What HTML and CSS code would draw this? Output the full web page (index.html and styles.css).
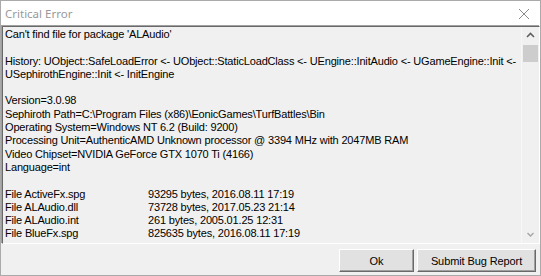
FILE: index.html
```html
<!DOCTYPE html>
<html lang="en">
<head>
    <meta charset="UTF-8">
    <title>Critical Error</title>
    <link rel="stylesheet" href="styles.css">
</head>
<body>
    <div class="window">
        <div class="titlebar">
            <span class="title">Critical Error</span>
            <svg class="close" width="12" height="12" viewBox="0 0 12 12">
                <path d="M1 1 L11 11 M11 1 L1 11" stroke="#8a8a8a" stroke-width="1" fill="none"/>
            </svg>
        </div>
        <div class="log">
            <div class="log-text">
                <div class="line">Can't find file for package 'ALAudio'</div>
                <div class="line">&nbsp;</div>
                <div class="line">History: UObject::SafeLoadError &lt;- UObject::StaticLoadClass &lt;- UEngine::InitAudio &lt;- UGameEngine::Init &lt;-</div>
                <div class="line">USephirothEngine::Init &lt;- InitEngine</div>
                <div class="line">&nbsp;</div>
                <div class="line">Version=3.0.98</div>
                <div class="line">Sephiroth Path=C:\Program Files (x86)\EonicGames\TurfBattles\Bin</div>
                <div class="line">Operating System=Windows NT 6.2 (Build: 9200)</div>
                <div class="line">Processing Unit=AuthenticAMD Unknown processor @ 3394 MHz with 2047MB RAM</div>
                <div class="line">Video Chipset=NVIDIA GeForce GTX 1070 Ti (4166)</div>
                <div class="line">Language=int</div>
                <div class="line">&nbsp;</div>
                <div class="file"><span>File ActiveFx.spg</span><span>93295 bytes, 2016.08.11 17:19</span></div>
                <div class="file"><span>File ALAudio.dll</span><span>73728 bytes, 2017.05.23 21:14</span></div>
                <div class="file"><span>File ALAudio.int</span><span>261 bytes, 2005.01.25 12:31</span></div>
                <div class="file"><span>File BlueFx.spg</span><span>825635 bytes, 2016.08.11 17:19</span></div>
            </div>
            <div class="scrollbar">
                <svg class="arrow" width="17" height="17" viewBox="0 0 17 17">
                    <path d="M5 10 L8.5 6.5 L12 10" stroke="#606060" stroke-width="1.6" fill="none"/>
                </svg>
                <div class="thumb"></div>
                <div class="track"></div>
                <svg class="arrow" width="17" height="17" viewBox="0 0 17 17">
                    <path d="M5.5 7 L8.5 10 L11.5 7" stroke="#a6a6a6" stroke-width="1.4" fill="none"/>
                </svg>
            </div>
        </div>
        <div class="buttons">
            <button class="btn btn-ok">Ok</button>
            <button class="btn btn-report">Submit Bug Report</button>
        </div>
    </div>
</body>
</html>
```

FILE: styles.css
```css
body {
    margin: 0;
    background: #f0f0f0;
}
.window {
    width: 541px;
    height: 276px;
    box-sizing: border-box;
    border: 1px solid #aaaaaa;
    background: #f0f0f0;
    display: flex;
    flex-direction: column;
    font-family: "Liberation Sans", Arial, sans-serif;
    font-size: 11px;
    color: #000;
}
.titlebar {
    height: 25px;
    flex: none;
    background: #fff;
    display: flex;
    align-items: center;
    justify-content: space-between;
    padding: 0 10px 0 4px;
}
.title {
    font-family: "Noto Sans", sans-serif;
    font-size: 11.5px;
    color: #999999;
}
.close {
    display: block;
}
.log {
    height: 218px;
    flex: none;
    box-sizing: border-box;
    margin-left: 1px;
    border-top: 1px solid #696969;
    border-left: 1px solid #696969;
    border-right: 1px solid #ffffff;
    border-bottom: 1px solid #ffffff;
    box-shadow: -1px -1px 0 #a0a0a0;
    display: flex;
}
.log-text {
    flex: 1;
    padding: 1px 0 0 2px;
    line-height: 13.3px;
    letter-spacing: -0.17px;
    white-space: nowrap;
    overflow: hidden;
}
.file {
    display: grid;
    grid-template-columns: 143px auto;
}
.scrollbar {
    width: 17px;
    flex: none;
    background: #f0f0f0;
    border-left: 1px solid #f7f7f7;
    display: flex;
    flex-direction: column;
}
.arrow {
    display: block;
    flex: none;
}
.thumb {
    height: 17px;
    margin: 1px 1px 0 1px;
    background: #cdcdcd;
}
.track {
    flex: 1;
}
.buttons {
    flex: 1;
    display: flex;
    justify-content: flex-end;
    align-items: flex-start;
    gap: 3px;
    padding: 5px 4px 0 0;
}
.btn {
    height: 23px;
    margin: 0;
    padding: 0;
    box-sizing: border-box;
    background: #e1e1e1;
    font-family: "Liberation Sans", Arial, sans-serif;
    font-size: 11px;
    letter-spacing: -0.1px;
    color: #000;
    border-top: 1px solid #ffffff;
    border-left: 1px solid #ffffff;
    border-right: 1px solid #696969;
    border-bottom: 1px solid #696969;
    box-shadow: inset -1px -1px 0 #a0a0a0;
}
.btn-ok {
    width: 75px;
}
.btn-report {
    width: 119px;
}
```
